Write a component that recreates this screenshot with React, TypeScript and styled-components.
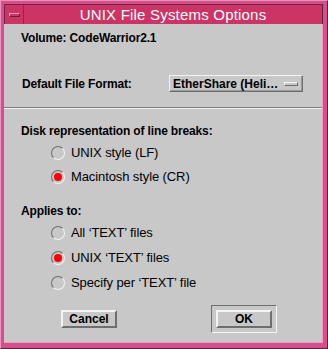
import styled, { createGlobalStyle } from 'styled-components';

const GlobalStyle = createGlobalStyle`
  html, body {
    margin: 0;
    padding: 0;
    background: #c8c8c8;
  }
  body {
    font-family: "Liberation Sans", Arial, sans-serif;
    -webkit-font-smoothing: none;
  }
`;

type Choice = { label: string; selected?: boolean };

const lineBreaks: Choice[] = [
  { label: 'UNIX style (LF)' },
  { label: 'Macintosh style (CR)', selected: true },
];

const appliesTo: Choice[] = [
  { label: 'All \u2018TEXT\u2019 files' },
  { label: 'UNIX \u2018TEXT\u2019 files', selected: true },
  { label: 'Specify per \u2018TEXT\u2019 file' },
];

const RadioRow: React.FC<{ choice: Choice }> = ({ choice }) => (
  <RadioItem>
    <RadioCircle $selected={!!choice.selected}>
      {choice.selected && <RadioDot />}
    </RadioCircle>
    <RadioLabel>{choice.label}</RadioLabel>
  </RadioItem>
);

export default function App() {
  return (
    <>
      <GlobalStyle />
      <Window>
        <TitleBar>
          <MenuButton>
            <MenuBar />
          </MenuButton>
          <Title>UNIX File Systems Options</Title>
        </TitleBar>
        <Body>
          <Section>
            <Heading>Volume: CodeWarrior2.1</Heading>
            <FormatRow>
              <Heading>Default File Format:</Heading>
              <Dropdown>
                <span>EtherShare (Heli…</span>
                <DropIndicator />
              </Dropdown>
            </FormatRow>
          </Section>
          <Separator />
          <Section>
            <GroupHeading>Disk representation of line breaks:</GroupHeading>
            <RadioGroup>
              {lineBreaks.map((c) => (
                <RadioRow key={c.label} choice={c} />
              ))}
            </RadioGroup>
            <GroupHeading $top={18}>Applies to:</GroupHeading>
            <RadioGroup $gap={9}>
              {appliesTo.map((c) => (
                <RadioRow key={c.label} choice={c} />
              ))}
            </RadioGroup>
          </Section>
          <ButtonRow>
            <Button>Cancel</Button>
            <DefaultFrame>
              <Button>OK</Button>
            </DefaultFrame>
          </ButtonRow>
        </Body>
      </Window>
    </>
  );
}

const Window = styled.div`
  box-sizing: border-box;
  width: 328px;
  height: 349px;
  display: flex;
  flex-direction: column;
  background: #d4508c;
  border: 1px solid;
  border-color: #ec94c0 #5c2430 #5c2430 #ec94c0;
  padding: 3px 4px 5px 3px;
`;

const TitleBar = styled.div`
  display: flex;
  height: 19px;
  background: #cc3466;
  border-top: 1px solid #7a2040;
  border-left: 1px solid #7a2040;
  border-right: 1px solid #5c2430;
`;

const MenuButton = styled.div`
  width: 18px;
  display: flex;
  align-items: center;
  justify-content: center;
  border-right: 1px solid #8a2a4c;
`;

const MenuBar = styled.div`
  width: 9px;
  height: 2px;
  background: #cc3466;
  border: 1px solid;
  border-color: #f0a0c4 #6a1e38 #6a1e38 #f0a0c4;
`;

const Title = styled.div`
  flex: 1;
  text-align: center;
  color: #ffffff;
  font-size: 15px;
  line-height: 19px;
  letter-spacing: 0.2px;
`;

const Body = styled.div`
  flex: 1;
  display: flex;
  flex-direction: column;
  background: #c8c8c8;
  border-right: 1px solid #ee9ac4;
  border-bottom: 1px solid #ee9ac4;
  padding-top: 6px;
`;

const Section = styled.div`
  display: flex;
  flex-direction: column;
  padding-left: 17px;
`;

const Heading = styled.div`
  font-size: 12px;
  font-weight: bold;
  line-height: 16px;
  letter-spacing: -0.15px;
  color: #000;
  white-space: nowrap;
`;

const GroupHeading = styled(Heading)<{ $top?: number }>`
  margin-top: ${(p) => p.$top ?? 14}px;
`;

const FormatRow = styled.div`
  display: flex;
  align-items: center;
  justify-content: space-between;
  margin-top: 29px;
  padding-left: 1px;
  padding-right: 19px;
`;

const Dropdown = styled.div`
  box-sizing: border-box;
  width: 134px;
  height: 17px;
  display: flex;
  align-items: center;
  justify-content: space-between;
  padding: 0 4px 0 3px;
  background: #c8c8c8;
  border: 1px solid;
  border-color: #f4f4f4 #6e6e6e #6e6e6e #f4f4f4;
  box-shadow: inset -1px -1px 0 #9a9a9a;
  font-size: 12px;
  font-weight: bold;
  white-space: nowrap;
`;

const DropIndicator = styled.div`
  width: 12px;
  height: 2px;
  background: #c8c8c8;
  border: 1px solid;
  border-color: #f4f4f4 #6e6e6e #6e6e6e #f4f4f4;
`;

const Separator = styled.div`
  margin-top: 15px;
  height: 0;
  border-top: 1px solid #7c7c7c;
  border-bottom: 1px solid #f0f0f0;
`;

const RadioGroup = styled.div<{ $gap?: number }>`
  display: flex;
  flex-direction: column;
  gap: ${(p) => p.$gap ?? 8}px;
  margin-top: 6px;
  padding-left: 30px;
`;

const RadioItem = styled.div`
  display: flex;
  align-items: center;
  height: 16px;
  gap: 6px;
`;

const RadioCircle = styled.div<{ $selected: boolean }>`
  box-sizing: border-box;
  width: 14px;
  height: 14px;
  border-radius: 50%;
  display: flex;
  align-items: center;
  justify-content: center;
  border: 1px solid;
  border-color: #6e6e6e #f4f4f4 #f4f4f4 #6e6e6e;
  background: ${(p) => (p.$selected ? '#c4c4c4' : '#c8c8c8')};
`;

const RadioDot = styled.div`
  width: 8px;
  height: 8px;
  border-radius: 50%;
  background: #ff0000;
`;

const RadioLabel = styled.span`
  font-size: 13px;
  line-height: 16px;
  letter-spacing: -0.1px;
  color: #000;
  white-space: nowrap;
`;

const ButtonRow = styled.div`
  display: flex;
  align-items: center;
  margin-top: 14px;
  padding-left: 57px;
  gap: 94px;
`;

const Button = styled.div`
  box-sizing: border-box;
  width: 56px;
  height: 18px;
  display: flex;
  align-items: center;
  justify-content: center;
  background: #c8c8c8;
  border: 2px solid;
  border-color: #f4f4f4 #6e6e6e #6e6e6e #f4f4f4;
  font-size: 12px;
  font-weight: bold;
  color: #000;
`;

const DefaultFrame = styled.div`
  box-sizing: border-box;
  width: 66px;
  height: 28px;
  display: flex;
  align-items: center;
  justify-content: center;
  border: 1px solid;
  border-color: #6e6e6e #f4f4f4 #f4f4f4 #6e6e6e;
`;
